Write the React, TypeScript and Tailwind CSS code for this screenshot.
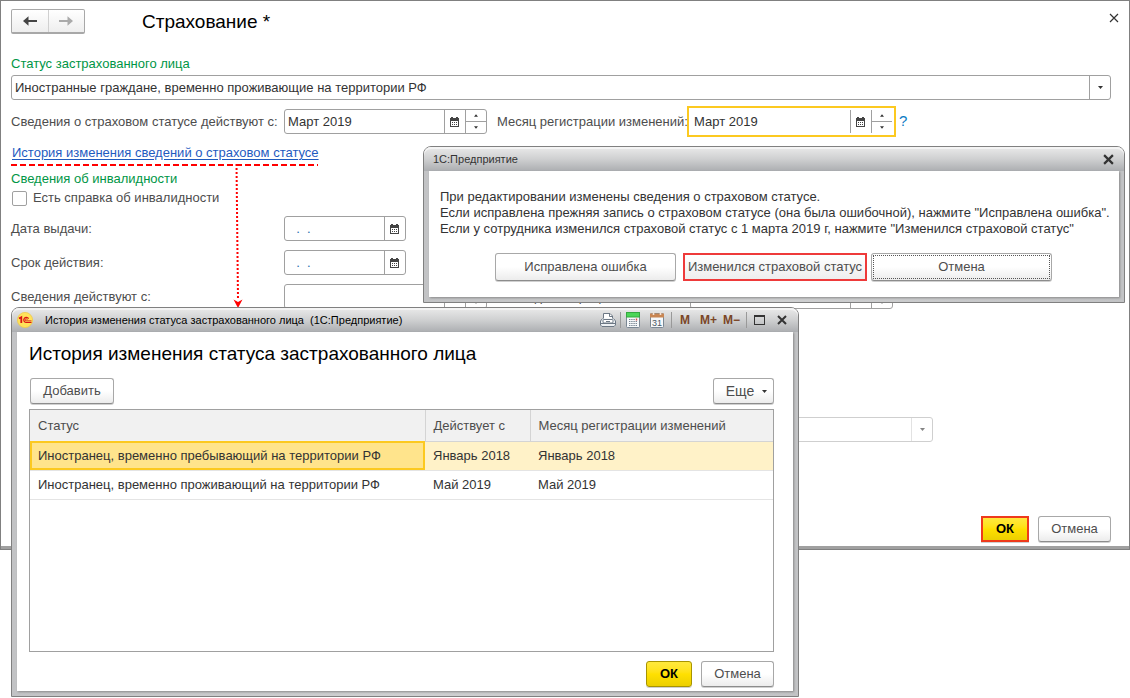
import type { ReactNode } from "react";

const btn =
  "rounded-[3px] border border-[#a8a8a8] border-b-[#8c8c8c] bg-gradient-to-b from-white from-50% to-[#ececec] text-[#4d4d4d] shadow-[0_1px_0_#d0d0d0] whitespace-nowrap";
const okBtn =
  "h-[26px] bg-gradient-to-b from-[#ffe93c] via-[#ffe000] to-[#eccf00] font-bold text-black shadow-[0_1px_0_#d0d0d0]";

function CalendarIcon() {
  return (
    <svg width="9" height="10" viewBox="0 0 9 10" shapeRendering="crispEdges" aria-hidden="true">
      <path fill="#444" fillRule="evenodd" d="M1 0h2v1h3V0h2v1h1v9H0V1h1zM1 4v5h7V4z" />
      <path fill="#444" d="M2 5h1v1H2zM4 5h1v1H4zM6 5h1v1H6zM2 7h1v1H2zM4 7h1v1H4zM6 7h1v1H6z" />
    </svg>
  );
}

function Caret({ up = false, size = 5 }: { up?: boolean; size?: number }) {
  return (
    <svg width={size} height="3" viewBox="0 0 5 3" aria-hidden="true">
      <path fill="#333" d={up ? "M0 3L2.500 0L5 3z" : "M0 0L2.500 3L5 0z"} />
    </svg>
  );
}

function MonthField({ id, value, active = false }: { id: string; value: string; active?: boolean }) {
  return (
    <div
      className={
        active
          ? "flex h-[25px] w-[203px] border border-transparent outline-2 outline-offset-1 outline-[#fcc920]"
          : "flex h-[25px] w-[203px] rounded-[3px] border border-[#a0a0a0]"
      }
    >
      <input id={id} defaultValue={value} className="min-w-0 flex-1 bg-transparent px-[3px] text-[#333] outline-none" />
      <button aria-label="Выбрать месяц" className="flex w-[21px] items-center justify-center border-l border-[#a0a0a0] pr-px">
        <CalendarIcon />
      </button>
      <div className="flex w-[21px] flex-col border-l border-[#a0a0a0]">
        <button aria-label="Следующий месяц" className="flex flex-1 items-center justify-center border-b border-[#a0a0a0]">
          <Caret up size={4} />
        </button>
        <button aria-label="Предыдущий месяц" className="flex flex-1 items-center justify-center">
          <Caret size={4} />
        </button>
      </div>
    </div>
  );
}

function MonthRow({ id, label, value, active = false, help = false }: { id: string; label: string; value: string; active?: boolean; help?: boolean }) {
  return (
    <div className="mt-[9px] flex h-[25px] items-center whitespace-nowrap">
      <label htmlFor={id + "-from"} className="w-[273px] shrink-0">{label}</label>
      <MonthField id={id + "-from"} value={value} />
      <label htmlFor={id + "-reg"} className="ml-[10px] w-[193px] shrink-0">Месяц регистрации изменений:</label>
      <MonthField id={id + "-reg"} value={value} active={active} />
      {help && <button className="ml-[6px] text-[15px] text-[#0a7bc4]">?</button>}
    </div>
  );
}

function DateRow({ id, label }: { id: string; label: string }) {
  return (
    <div className="mt-[9px] flex h-[25px] items-center">
      <label htmlFor={id} className="w-[273px]">{label}</label>
      <div className="flex h-[25px] w-[122px] rounded-[3px] border border-[#a0a0a0]">
        <input id={id} defaultValue={"\u00a0\u00a0.\u00a0\u00a0."} className="min-w-0 flex-1 bg-transparent px-1 text-[#2a6fb0] outline-none" />
        <button aria-label="Выбрать дату" className="flex w-[21px] items-center justify-center border-l border-[#a0a0a0] pr-px">
          <CalendarIcon />
        </button>
      </div>
    </div>
  );
}

function CloseIcon({ size, stroke }: { size: number; stroke: number }) {
  return (
    <svg width={size} height={size} viewBox="0 0 10 10" aria-hidden="true">
      <path d="M1 1l8 8M9 1L1 9" stroke="#333" strokeWidth={stroke} />
    </svg>
  );
}

function Frame({ title, place, children }: { title: ReactNode; place: string; children: ReactNode }) {
  return (
    <section
      className={
        "absolute rounded-t-[8px] border border-[#808080] bg-gradient-to-r from-[#c2c3c5] via-[#cfd0d1] to-[#c2c3c5] px-[5px] pb-[5px] " + place
      }
    >
      <header className="-mx-[5px] flex h-[24px] items-center rounded-t-[7px] bg-gradient-to-b from-[#eaeaea] via-[#cfd0d1] to-[#acaeb1] text-[11px] shadow-[inset_0_2px_0_#f4f4f4]">
        {title}
      </header>
      <div className="bg-white shadow-[1px_1px_2px_#8a8a8a]">{children}</div>
    </section>
  );
}

function LogoIcon() {
  return (
    <svg width="16" height="16" viewBox="0 0 16 16" aria-hidden="true">
      <circle cx="8" cy="8" r="7.600" fill="#ffe25a" stroke="#f0c94a" strokeWidth=".8" />
      <path d="M2 6.500L4.300 5.300V11" fill="none" stroke="#d91414" strokeWidth="1.800" />
      <path d="M11.600 6.600A2.600 2.600 0 1 0 9 10.500H14.500" fill="none" stroke="#d91414" strokeWidth="1.200" />
      <path d="M10.300 7.700a1.100 1.100 0 1 0-1.300 1.200H14.500" fill="none" stroke="#d91414" strokeWidth=".9" />
    </svg>
  );
}

function PrinterIcon() {
  return (
    <svg width="16" height="16" viewBox="0 0 16 16" aria-hidden="true">
      <path d="M3.500 8V1.500h6.500L12.500 4v4" fill="#fff" stroke="#6d7885" />
      <path d="M9.500 1.500V4.500h3" fill="none" stroke="#6d7885" />
      <path d="M2.500 6.500L.5 9v4l1.500 1.500h12l1.500-1.500V9l-2-2.500" fill="#eef1f4" stroke="#6d7885" />
      <rect x="3" y="7.500" width="10" height="3.500" rx="1" fill="#fff" stroke="#6d7885" />
      <path d="M1 11.500h14M6 9.500h4" stroke="#6d7885" />
    </svg>
  );
}

function CalculatorIcon() {
  return (
    <svg width="14" height="16" viewBox="0 0 14 16" aria-hidden="true">
      <rect x=".5" y=".5" width="13" height="15" rx="1" fill="#f6f8fa" stroke="#7a8794" />
      <rect x=".5" y=".5" width="13" height="4.500" fill="#4bd557" stroke="#34a83f" />
      <path d="M3 7.500h6.500M3 9.500h8M3 11.500h8M3 13.500h8" stroke="#7a8794" strokeWidth="1.200" strokeDasharray="1.400 .8" />
      <path d="M9.800 6.500h1.400v2H9.800z" fill="#e04a3c" />
    </svg>
  );
}

function DayIcon() {
  return (
    <svg width="14" height="16" viewBox="0 0 14 16" aria-hidden="true">
      <rect x=".5" y="1.500" width="13" height="14" rx="1" fill="#f6f8fa" stroke="#7a8794" />
      <path d="M0 1.500h14V5.500H0z" fill="#c98653" />
      <path d="M3.500 0v3M10.500 0v3" stroke="#f3e3d6" strokeWidth="1.600" />
      <text x="7" y="13.500" textAnchor="middle" fontSize="9" fontFamily="Liberation Sans, sans-serif" fill="#4a5663">31</text>
    </svg>
  );
}

const columns = ["Статус", "Действует с", "Месяц регистрации изменений"];
const rows = [
  ["Иностранец, временно пребывающий на территории РФ", "Январь 2018", "Январь 2018"],
  ["Иностранец, временно проживающий на территории РФ", "Май 2019", "Май 2019"],
];

export default function App() {
  return (
    <div className="relative min-h-screen bg-white font-['Liberation_Sans',Arial,sans-serif] text-[13px] text-[#4d4d4d]">
      <main className="border border-[#808080] bg-white">
        <div className="flex flex-col border-b-[3px] border-[#a0a0a0] px-[10px] pt-2 pb-1">
          <div className="flex h-[25px] items-center">
            <div className="flex h-[25px] w-[74px] rounded-[2px] border border-b-2 border-[#a8a8a8] bg-gradient-to-b from-white to-[#eeeeee]">
              <button aria-label="Назад" className="flex flex-1 items-center justify-center border-r border-[#d0d0d0]">
                <svg width="14" height="10" viewBox="0 0 14 10"><path d="M0 5l5.500-4.800v3.700H14v2.200H5.500v3.700z" fill="#444" /></svg>
              </button>
              <button aria-label="Вперед" className="flex flex-1 items-center justify-center">
                <svg width="14" height="10" viewBox="0 0 14 10"><path d="M14 5L8.500.2v3.700H0v2.200h8.500v3.700z" fill="#aaa" /></svg>
              </button>
            </div>
            <h1 className="ml-[57px] flex-1 pt-[2px] text-[19px] text-black">Страхование *</h1>
            <button aria-label="Закрыть" className="-mt-2"><CloseIcon size={10} stroke={1.2} /></button>
          </div>

          <label htmlFor="status" className="mt-5 h-5 leading-5 text-[#009646]">Статус застрахованного лица</label>
          <div className="mt-px mr-2 flex h-[25px] rounded-[3px] border border-[#a0a0a0]">
            <input id="status" defaultValue="Иностранные граждане, временно проживающие на территории РФ" className="min-w-0 flex-1 bg-transparent px-[3px] text-[#333] outline-none" />
            <button aria-label="Открыть список" className="flex w-[21px] items-center justify-center border-l border-[#a0a0a0]"><Caret /></button>
          </div>

          <MonthRow id="insured" label="Сведения о страховом статусе действуют с:" value="Март 2019" active help />

          <a href="#history" className="mt-[10px] w-[307px] bg-[repeating-linear-gradient(to_right,#f00_0_6px,transparent_6px_9px)] bg-[length:100%_2px] bg-bottom bg-no-repeat pb-1 pl-px leading-[18px] whitespace-nowrap text-[#1f5bbf] underline underline-offset-2">
            История изменения сведений о страховом статусе
          </a>
          <h2 className="mt-1 leading-[18px] text-[#009646]">Сведения об инвалидности</h2>
          <label className="mt-px flex h-[18px] items-center gap-[6px]">
            <input type="checkbox" className="ml-px size-[15px] appearance-none rounded-[2px] border border-[#a0a0a0] bg-white" />
            Есть справка об инвалидности
          </label>
          <DateRow id="issued" label="Дата выдачи:" />
          <DateRow id="valid" label="Срок действия:" />
          <MonthRow id="disability" label="Сведения действуют с:" value="" />
          <div className="mt-[108px] ml-[273px] flex h-[25px] w-[649px] rounded-[3px] border border-[#cfcfcf]">
            <input aria-label="Вид" disabled className="min-w-0 flex-1" />
            <button aria-label="Открыть список" disabled className="flex w-[21px] items-center justify-center border-l border-[#cfcfcf] opacity-60"><Caret /></button>
          </div>
          <div className="mt-[74px] mr-2 flex justify-end gap-[9px]">
            <button className={okBtn + " w-12 border-2 border-[#ee3a1c]"}>ОК</button>
            <button className={btn + " h-[26px] w-[73px]"}>Отмена</button>
          </div>
        </div>
      </main>

      <svg className="pointer-events-none absolute top-[164px] left-[230px]" width="16" height="144" viewBox="0 0 16 144" aria-hidden="true">
        <path d="M6.500 0L8 136" stroke="#f00" strokeWidth="2" strokeDasharray="2 2" />
        <path d="M3.500 135.500L8 138L12.500 135.500L8 144z" fill="#f00" />
      </svg>

      <Frame
        place="top-[146px] left-[423px] w-[702px]"
        title={
          <>
            <h2 className="ml-[9px] flex-1 text-[#333]">1С:Предприятие</h2>
            <button aria-label="Закрыть" className="mr-[10px]"><CloseIcon size={11} stroke={2} /></button>
          </>
        }
      >
        <div className="px-[11px] pt-[18px] pb-4">
          <p className="leading-4 whitespace-nowrap text-[#333]">
            При редактировании изменены сведения о страховом статусе.<br />
            Если исправлена прежняя запись о страховом статусе (она была ошибочной), нажмите "Исправлена ошибка".<br />
            Если у сотрудника изменился страховой статус с 1 марта 2019 г, нажмите "Изменился страховой статус"
          </p>
          <div className="mt-4 ml-[55px] flex">
            <button className={btn + " h-7 w-[181px]"}>Исправлена ошибка</button>
            <button className="ml-[7px] h-7 w-[184px] border-2 border-[#ee3a3a] bg-gradient-to-b from-white to-[#eeeeee] whitespace-nowrap">Изменился страховой статус</button>
            <button className={btn + " ml-1 h-7 w-[181px] p-px"}>
              <span className="flex h-full items-center justify-center border border-dotted border-[#555]">Отмена</span>
            </button>
          </div>
        </div>
      </Frame>

      <Frame
        place="top-[307px] left-[11px] w-[788px]"
        title={
          <>
            <span className="ml-[5px]"><LogoIcon /></span>
            <h2 className="ml-3 flex-1 whitespace-pre text-black">История изменения статуса застрахованного лица  (1С:Предприятие)</h2>
            <button aria-label="Печать"><PrinterIcon /></button>
            <span className="ml-[4px] h-4 w-px bg-[#999]" />
            <button aria-label="Калькулятор" className="ml-[5px]"><CalculatorIcon /></button>
            <button aria-label="Календарь" className="ml-[10px]"><DayIcon /></button>
            <span className="ml-[7px] h-4 w-px bg-[#999]" />
            <button className="ml-2 text-xs font-bold text-[#7a4526]">M</button>
            <button className="ml-[10px] text-xs font-bold text-[#7a4526]">M+</button>
            <button className="ml-[6px] text-xs font-bold text-[#7a4526]">M−</button>
            <span className="ml-[6px] h-4 w-px bg-[#999]" />
            <button aria-label="Развернуть" className="ml-[7px] h-[10px] w-[11px] border border-t-2 border-[#333]" />
            <button aria-label="Закрыть" className="mr-[11px] ml-3"><CloseIcon size={10} stroke={2} /></button>
          </>
        }
      >
        <div className="px-3 pt-[10px] pr-[19px] pb-1">
          <h1 id="history" className="text-[19px] leading-6 text-black">История изменения статуса застрахованного лица</h1>
          <div className="mt-3 flex justify-between">
            <button className={btn + " ml-px h-[26px] w-[84px]"}>Добавить</button>
            <button className={btn + " flex h-[26px] w-[61px] items-center justify-center gap-2 pl-[6px] text-sm"}>Еще <Caret /></button>
          </div>
          <div className="mt-[5px] min-h-[243px] border border-[#a0a0a0]">
            <table className="w-full table-fixed border-collapse text-left text-[#333]">
              <colgroup><col className="w-[395px]" /><col className="w-[105px]" /><col /></colgroup>
              <thead>
                <tr className="h-[31px] border-b border-[#d4d4d4] bg-[#f1f1f1] text-[#4d4d4d]">
                  {columns.map((c) => (
                    <th key={c} className="border-r border-[#d4d4d4] px-2 font-normal last:border-r-0">{c}</th>
                  ))}
                </tr>
              </thead>
              <tbody>
                {rows.map((r, i) => (
                  <tr key={r[0]} className={i === 0 ? "h-[29px] border-b border-[#e4e4e4] bg-[#fff2c8]" : "h-[29px] border-b border-[#e4e4e4]"}>
                    {r.map((c, j) => (
                      <td key={j} className={i === 0 && j === 0 ? "bg-[#ffe48c] px-2 outline-2 -outline-offset-2 outline-[#fcc920]" : "px-2"}>{c}</td>
                    ))}
                  </tr>
                ))}
              </tbody>
            </table>
          </div>
          <div className="mt-[9px] flex justify-end gap-[9px]">
            <button className={okBtn + " w-[46px] rounded-[3px] border border-[#a89400]"}>ОК</button>
            <button className={btn + " h-[26px] w-[73px]"}>Отмена</button>
          </div>
        </div>
      </Frame>
    </div>
  );
}
